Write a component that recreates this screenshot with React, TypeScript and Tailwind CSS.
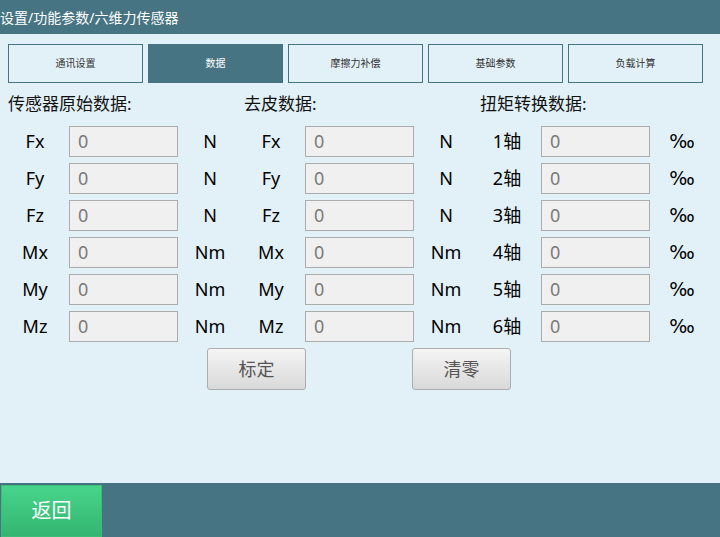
const tabs = ["通讯设置", "数据", "摩擦力补偿", "基础参数", "负载计算"];

const groups = [
  { title: "传感器原始数据:", labels: ["Fx", "Fy", "Fz", "Mx", "My", "Mz"], units: ["N", "N", "N", "Nm", "Nm", "Nm"] },
  { title: "去皮数据:", labels: ["Fx", "Fy", "Fz", "Mx", "My", "Mz"], units: ["N", "N", "N", "Nm", "Nm", "Nm"] },
  { title: "扭矩转换数据:", labels: ["1轴", "2轴", "3轴", "4轴", "5轴", "6轴"], units: ["‰", "‰", "‰", "‰", "‰", "‰"] },
];

function Group({ title, labels, units }: { title: string; labels: string[]; units: string[] }) {
  return (
    <div className="w-[236px] flex flex-col">
      <div className="h-[20px] leading-[20px] text-[17px] text-[#111]">{title}</div>
      <div className="mt-[12px] flex flex-col gap-[6px]">
        {labels.map((l, i) => (
          <div key={i} className="flex items-center h-[31px]">
            <div className="w-[54px] text-center text-[18px] text-black">{l}</div>
            <div className="ml-[7px] w-[109px] h-[31px] bg-[#f0f0f0] border border-[#acacac] flex items-center pl-[8px] text-[18px] text-[#7a7a7a]">
              0
            </div>
            <div
              className={
                units[i] === "‰"
                  ? "w-[64px] text-center text-[19px] text-black font-['DejaVu_Sans']"
                  : "w-[64px] text-center text-[18px] text-black"
              }
            >
              {units[i]}
            </div>
          </div>
        ))}
      </div>
    </div>
  );
}

function App() {
  return (
    <div
      className="w-[720px] h-[537px] flex flex-col bg-[#e2f1f7] overflow-hidden"
      style={{ fontFamily: '"Noto Sans", "Noto Sans CJK SC", sans-serif' }}
    >
      <div className="h-[34px] bg-[#477482] flex items-center text-white text-[14px] pl-0">
        设置/功能参数/六维力传感器
      </div>

      <div className="flex gap-[5px] pl-[8px] mt-[10px]">
        {tabs.map((t, i) => (
          <div
            key={t}
            className={
              i === 1
                ? "w-[135px] h-[39px] bg-[#477482] border border-[#477482] flex items-center justify-center text-[10px] text-white"
                : "w-[135px] h-[39px] border border-[#477482] flex items-center justify-center text-[10px] text-[#333]"
            }
          >
            {t}
          </div>
        ))}
      </div>

      <div className="flex pl-[8px] mt-[11px]">
        {groups.map((g) => (
          <Group key={g.title} {...g} />
        ))}
      </div>

      <div className="flex mt-[6px]">
        <button className="ml-[207px] w-[99px] h-[42px] rounded-[3px] border border-[#adadad] bg-gradient-to-b from-[#f5f5f5] to-[#d9d9d9] text-[18px] text-[#555]">
          标定
        </button>
        <button className="ml-[106px] w-[99px] h-[42px] rounded-[3px] border border-[#adadad] bg-gradient-to-b from-[#f5f5f5] to-[#d9d9d9] text-[18px] text-[#555]">
          清零
        </button>
      </div>

      <div className="flex-1" />

      <div className="h-[54px] bg-[#477482] flex items-end">
        <button className="ml-[1px] w-[101px] h-[52px] bg-gradient-to-b from-[#48d58b] to-[#33b571] border border-[#3bbd78] text-white text-[20px]">
          返回
        </button>
      </div>
    </div>
  );
}

export default App;
